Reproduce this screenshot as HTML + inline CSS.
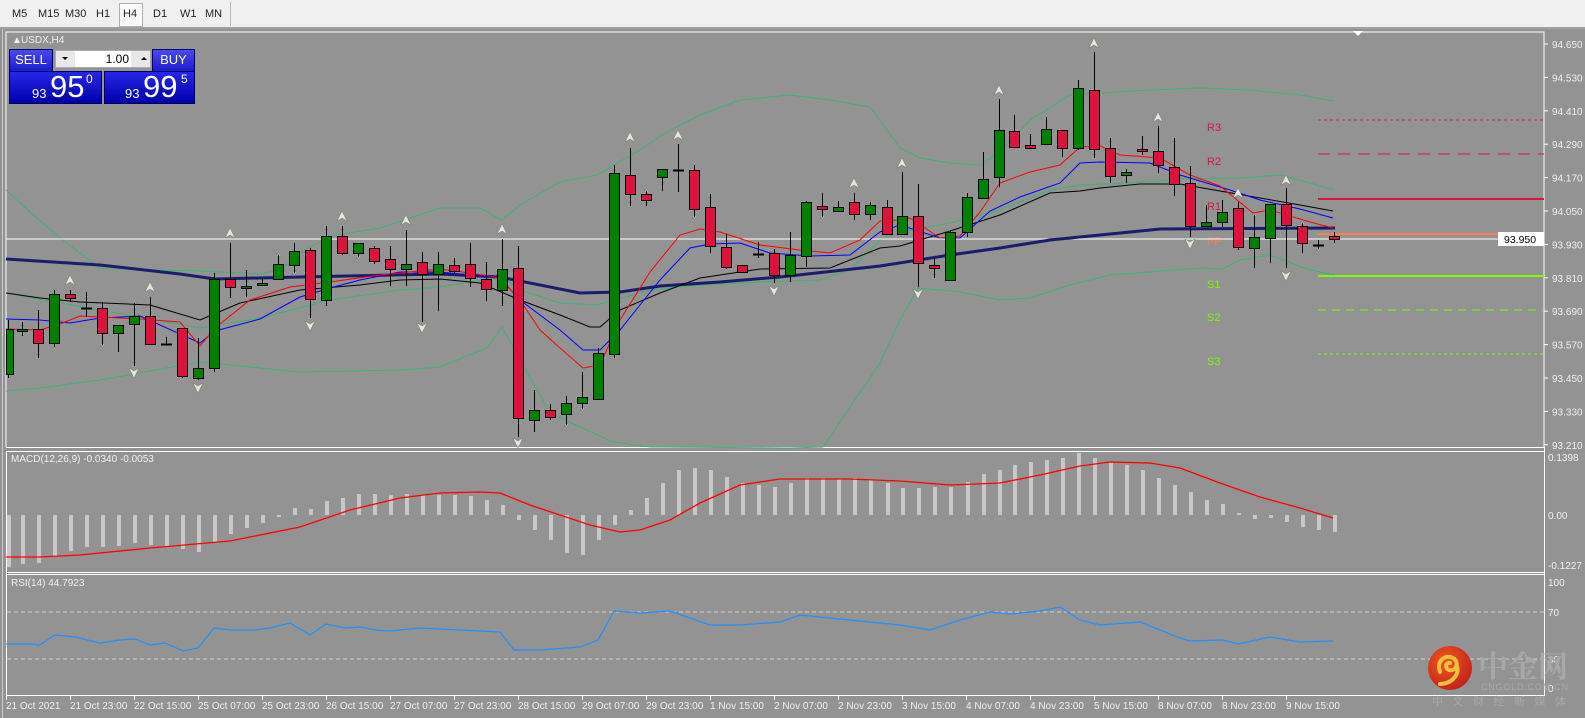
<!DOCTYPE html>
<html><head><meta charset="utf-8">
<style>
html,body{margin:0;padding:0;width:1585px;height:718px;overflow:hidden;background:#939393;font-family:"Liberation Sans","Noto Sans CJK SC",sans-serif;}
#tb{position:absolute;left:0;top:0;width:1585px;height:27px;background:#f0f0f0;border-bottom:2px solid #a0a0a0;}
#tb span{position:absolute;top:8px;font-size:11px;color:#222;}
#h4{position:absolute;left:119px;top:3px;width:22px;height:22px;border:1px solid #b0b0b0;background:#fafafa;}
#sep{position:absolute;left:230px;top:2px;width:1px;height:24px;background:#b8b8b8;}
svg{position:absolute;left:0;top:0;}
.btn{position:absolute;background:linear-gradient(#4a4af0,#1a1ad0);border:1px solid #00006a;color:#fff;font-size:13px;text-align:center;box-sizing:border-box;}
.pb{position:absolute;background:linear-gradient(#2626e8,#0000a8);border:1px solid #00005a;box-sizing:border-box;color:#fff;}
</style></head><body>
<div id="tb">
<span style="left:12px">M5</span><span style="left:38px">M15</span><span style="left:65px">M30</span><span style="left:96px">H1</span>
<div id="h4"></div><span style="left:123px">H4</span><span style="left:153px">D1</span><span style="left:180px">W1</span><span style="left:205px">MN</span>
<div id="sep"></div>
</div>
<svg id="s" width="1585" height="718" xmlns="http://www.w3.org/2000/svg" style="top:0">
<g font-family="Liberation Sans, sans-serif" font-size="10" fill="#f0f0f0">
<rect x="2" y="29" width="1" height="689" fill="#c8c8c8"/>
<polyline points="6,447 6,32 1544,32 1544,447" fill="none" stroke="#fff" stroke-width="1"/>
<line x1="6" y1="447.5" x2="1544" y2="447.5" stroke="#fff"/>
<line x1="6" y1="451.5" x2="1544" y2="451.5" stroke="#fff"/>
<line x1="6" y1="572.5" x2="1544" y2="572.5" stroke="#fff"/>
<line x1="6" y1="574.5" x2="1544" y2="574.5" stroke="#fff"/>
<line x1="6" y1="695.5" x2="1544" y2="695.5" stroke="#fff"/>
<line x1="6.5" y1="451" x2="6.5" y2="696" stroke="#fff"/>
<line x1="1544.5" y1="447" x2="1544.5" y2="696" stroke="#fff"/>
<path d="M1353,31 L1363,31 L1358,36 Z" fill="#fff"/>
<text x="12" y="43" font-size="10">▲</text>
<text x="21" y="43">USDX,H4</text>
<g id="pax"></g>
<line x1="1318" y1="120" x2="1544" y2="120" stroke="#dc143c" stroke-dasharray="3,3"/>
<line x1="1318" y1="154" x2="1544" y2="154" stroke="#dc143c" stroke-dasharray="12,8"/>
<line x1="1318" y1="199" x2="1544" y2="199" stroke="#dc143c" stroke-width="2"/>
<line x1="1318" y1="234" x2="1544" y2="234" stroke="#ff8050" stroke-width="2"/>
<line x1="1318" y1="276" x2="1544" y2="276" stroke="#7cfc00" stroke-width="2"/>
<line x1="1318" y1="310" x2="1544" y2="310" stroke="#7cfc00" stroke-dasharray="8,6"/>
<line x1="1318" y1="354" x2="1544" y2="354" stroke="#7cfc00" stroke-dasharray="3,3"/>
<g font-size="11">
<text x="1207" y="131" fill="#dc143c">R3</text><text x="1207" y="165" fill="#dc143c">R2</text><text x="1207" y="210" fill="#dc143c">R1</text>
<text x="1207" y="245" fill="#ff8050">PP</text><text x="1207" y="288" fill="#7cfc00">S1</text><text x="1207" y="321" fill="#7cfc00">S2</text><text x="1207" y="365" fill="#7cfc00">S3</text>
</g>
<g fill="none" stroke="#3cb371" stroke-width="1">
<polyline points="6,190 30,212 60,238 100,268 150,270 200,271 260,274 280,270 300,253 330,236 380,228 440,208 480,208 502,220 520,205 560,182 597,175 640,150 667,132 700,115 740,100 790,95 830,100 870,107 900,148 920,158 950,163 980,165 1000,152 1030,120 1070,95 1100,93 1150,90 1200,88 1250,90 1300,95 1334,101"/>
<polyline points="6,293 100,310 200,328 260,318 330,300 400,290 440,287 502,277 520,290 560,303 597,305 650,290 700,285 760,282 820,280 850,270 880,240 900,232 950,223 1000,210 1050,190 1080,185 1130,183 1180,179 1240,178 1280,175 1310,183 1334,190"/>
<polyline points="6,391 40,388 100,380 200,362 300,372 400,370 440,367 487,348 502,327 550,413 613,442 650,447 790,448 823,447 880,363 900,320 918,288 930,289 960,292 1000,300 1030,298 1070,285 1110,275 1150,272 1200,268 1223,269 1240,260 1270,255 1307,269 1334,275"/>
</g>
<line x1="6" y1="239" x2="1544" y2="239" stroke="#fff"/>
<polyline fill="none" stroke="#1c1c6c" stroke-width="3" points="6,259 100,265 180,274 215,279 300,277 440,274 500,277 580,293 620,292 660,286 720,282 780,277 880,266 950,255 1000,248 1050,240 1100,235 1160,229 1335,228"/>
<polyline fill="none" stroke="#000" stroke-width="1" points="6,293 40,298 80,302 150,305 200,320 240,303 300,290 360,285 400,280 440,279 480,283 520,300 560,315 590,327 600,327 620,310 660,293 700,278 760,269 830,268 880,248 900,246 950,231 1000,215 1050,193 1080,191 1100,188 1140,184 1180,184 1220,191 1260,198 1300,205 1333,211"/>
<polyline fill="none" stroke="#0000ff" stroke-width="1" points="6,319 40,320 70,323 100,318 140,316 200,343 215,331 260,319 300,297 330,288 360,280 400,272 440,272 500,278 520,300 560,330 583,350 600,350 620,330 660,280 690,248 710,244 740,243 770,253 810,256 850,255 880,232 900,225 940,238 960,238 990,211 1020,197 1060,183 1080,163 1100,162 1150,163 1180,175 1230,190 1260,200 1300,209 1333,218"/>
<polyline fill="none" stroke="#ff0000" stroke-width="1" points="6,329 40,330 60,324 80,316 100,317 140,319 180,322 200,346 215,328 250,300 290,287 330,282 380,275 420,271 440,269 470,273 500,278 520,300 540,330 560,348 583,368 600,365 620,320 650,272 680,235 700,229 720,232 760,245 800,250 830,253 860,240 880,221 900,220 910,218 940,238 960,236 980,212 1000,183 1030,172 1060,165 1080,147 1100,146 1120,155 1160,158 1190,175 1220,186 1253,213 1270,210 1310,222 1333,228"/>
<g id="cd"></g>
<g id="fr" fill="#e8e8d8" stroke="#777" stroke-width="0.5"></g>
<rect x="1498" y="232" width="46" height="14" fill="#fff"/>
<text x="1504" y="243" fill="#000" font-size="10.5">93.950</text>
<text x="11" y="462">MACD(12,26,9) -0.0340 -0.0053</text>
<g id="mh" fill="#c8c8c8"></g>
<polyline fill="none" stroke="#ff0000" stroke-width="1.3" points="6,557 40,557 80,555 150,548 230,541 300,527 350,510 400,498 440,493 480,492 500,493 530,505 560,515 590,525 620,532 640,530 670,520 700,503 740,485 780,479 850,479 900,481 950,485 1000,483 1040,475 1080,466 1110,462 1150,463 1180,468 1220,483 1260,497 1300,508 1333,518"/>
<text x="1548" y="461">0.1398</text><text x="1548" y="519">0.00</text><text x="1548" y="569">-0.1227</text>
<text x="11" y="586">RSI(14) 44.7923</text>
<line x1="7" y1="612" x2="1544" y2="612" stroke="#d0d0d0" stroke-dasharray="4,3"/>
<line x1="7" y1="659" x2="1544" y2="659" stroke="#d0d0d0" stroke-dasharray="4,3"/>
<polyline fill="none" stroke="#1e90ff" stroke-width="1.2" points="6,644 36,644 38,646 55,635 75,637 100,643 120,640 135,639 150,645 165,643 183,651 198,648 214,628 230,630 255,630 270,628 290,623 310,635 326,624 345,628 360,627 375,630 390,631 420,628 460,630 500,632 514,650 540,650 580,647 598,640 614,611 640,613 670,611 690,618 710,625 740,625 780,622 800,615 830,618 870,622 900,625 930,630 960,620 990,612 1010,614 1040,611 1060,607 1080,620 1100,625 1140,622 1180,638 1190,641 1223,640 1238,644 1270,637 1300,642 1333,641"/>
<text x="1548" y="586">100</text><text x="1548" y="616">70</text><text x="1548" y="663">30</text><text x="1548" y="692">0</text>
<g id="tax"></g>
<defs><radialGradient id="lg" cx="0.4" cy="0.35" r="0.7"><stop offset="0" stop-color="#f05a20"/><stop offset="1" stop-color="#c0201a"/></radialGradient></defs>
<circle cx="1450" cy="668" r="22" fill="url(#lg)"/>
<path d="M1440,672 C1436,660 1446,654 1453,658 C1460,662 1456,672 1449,670 C1444,668 1446,662 1450,663 M1457,666 C1460,676 1450,684 1440,684" fill="none" stroke="#f5c040" stroke-width="4" stroke-linecap="round"/>
<text x="1478" y="677" font-family="Noto Serif CJK SC, serif" font-size="30" font-weight="bold" fill="#a8a8a8">中金网</text>
<text x="1481" y="690" font-size="9" fill="#a8a8a8" letter-spacing="0.8">CNGOLD.COM.CN</text>
<text x="1432" y="705" font-size="11" fill="#a8a8a8" letter-spacing="9.5" font-family="Noto Sans CJK SC, sans-serif">中文财经新媒体</text>
</g>
</svg>
<div class="btn" style="left:9px;top:49px;width:44px;height:23px;line-height:20px">SELL</div>
<div style="position:absolute;left:55px;top:50px;width:96px;height:18px;background:#e8e8e8;border:1px solid #aaa;box-sizing:border-box;">
<div style="position:absolute;left:19px;top:0;width:56px;height:16px;background:#fff;font-size:12px;text-align:right;line-height:16px;padding-right:2px;box-sizing:border-box">1.00</div>
<div style="position:absolute;left:6px;top:6px;border-left:3px solid transparent;border-right:3px solid transparent;border-top:3px solid #000"></div>
<div style="position:absolute;left:85px;top:6px;border-left:3px solid transparent;border-right:3px solid transparent;border-bottom:3px solid #000"></div>
</div>
<div class="btn" style="left:152px;top:49px;width:43px;height:23px;line-height:20px">BUY</div>
<div class="pb" style="left:9px;top:71px;width:93px;height:33px">
<span style="position:absolute;left:22px;top:14px;font-size:13px">93</span>
<span style="position:absolute;left:40px;top:-3px;font-size:31px">95</span>
<span style="position:absolute;left:76px;top:0px;font-size:12px">0</span></div>
<div class="pb" style="left:104px;top:71px;width:91px;height:33px">
<span style="position:absolute;left:20px;top:14px;font-size:13px">93</span>
<span style="position:absolute;left:38px;top:-3px;font-size:31px">99</span>
<span style="position:absolute;left:76px;top:0px;font-size:12px">5</span></div>
<script>
var NS="http://www.w3.org/2000/svg";
function el(p,t,a,txt){var e=document.createElementNS(NS,t);for(var k in a)e.setAttribute(k,a[k]);if(txt)e.textContent=txt;document.getElementById(p).appendChild(e);return e;}
var C=[[8,329,374,320,378,'g'],[22,329,331,322,336,'g'],[38,329,343,310,358,'r'],[54,294,343,290,347,'g'],[70,294,298,290,302,'r'],[86,308,308,292,317,'d'],[102,308,333,302,345,'r'],[118,325,333,325,352,'g'],[134,316,324,303,366,'g'],[150,316,344,297,344,'r'],[166,344,344,337,344,'d'],[182,328,376,328,378,'r'],[198,368,378,338,380,'g'],[214,279,368,273,372,'g'],[230,279,287,243,298,'r'],[246,286,287,270,297,'g'],[262,283,285,278,286,'g'],[278,264,279,255,280,'g'],[294,251,265,243,273,'g'],[310,250,299,248,318,'r'],[326,236,300,226,306,'g'],[342,236,253,226,255,'r'],[358,243,253,243,257,'g'],[374,248,261,246,264,'r'],[390,259,269,246,286,'r'],[406,264,269,230,286,'g'],[422,262,274,252,322,'r'],[438,264,274,252,311,'g'],[454,265,271,258,274,'r'],[470,264,278,243,287,'r'],[486,279,289,262,301,'r'],[502,269,290,239,306,'g'],[518,268,418,246,437,'r'],[534,410,420,390,432,'g'],[550,410,417,404,420,'r'],[566,403,414,396,425,'g'],[582,397,403,372,409,'g'],[598,353,399,348,399,'g'],[614,173,354,165,358,'g'],[630,175,194,148,206,'r'],[646,194,200,191,206,'r'],[662,169,177,169,191,'g'],[678,170,170,144,192,'d'],[694,170,209,165,217,'r'],[710,207,246,194,253,'r'],[726,247,267,234,269,'r'],[742,265,272,265,272,'r'],[758,254,254,242,258,'d'],[774,253,275,249,283,'r'],[790,255,275,232,282,'g'],[806,202,256,201,267,'g'],[822,206,209,193,217,'r'],[838,207,211,201,212,'g'],[854,202,214,193,220,'r'],[870,205,214,202,220,'g'],[887,207,234,200,235,'r'],[902,216,234,172,235,'g'],[918,216,263,184,287,'r'],[934,265,268,258,278,'r'],[950,232,280,230,280,'g'],[967,197,232,193,237,'g'],[983,179,198,152,198,'g'],[999,130,177,99,187,'g'],[1014,131,147,115,147,'r'],[1030,145,148,134,148,'r'],[1046,129,144,117,144,'g'],[1062,130,148,130,157,'r'],[1078,88,148,80,150,'g'],[1094,90,149,52,158,'r'],[1110,148,176,138,183,'r'],[1126,172,175,169,183,'g'],[1142,149,151,136,155,'r'],[1158,151,165,126,173,'r'],[1174,167,184,138,196,'r'],[1190,183,226,166,237,'r'],[1206,222,226,205,227,'g'],[1222,212,222,200,227,'g'],[1238,208,247,202,250,'r'],[1254,237,248,215,268,'g'],[1270,204,238,204,263,'g'],[1286,204,225,188,268,'r'],[1302,226,243,223,253,'r'],[1318,245,245,240,249,'d'],[1334,236,239,232,243,'r']];
C.forEach(function(c){var x=c[0];el('cd','line',{x1:x+.5,y1:c[3],x2:x+.5,y2:c[4],stroke:'#000'});
if(c[5]=='d'){el('cd','line',{x1:x-5,y1:c[1]+.5,x2:x+6,y2:c[1]+.5,stroke:'#000','stroke-width':2});}
else{var h=Math.max(c[2]-c[1],2);el('cd','rect',{x:Math.max(x-4.5,6.5),y:c[1]+.5,width:x-4.5<6.5?x+5.5-6.5:10,height:h,fill:c[5]=='g'?'#008000':'#dc143c',stroke:'#000'});}});
var up=[[70,280],[150,287],[230,233],[342,216],[406,220],[502,229],[630,137],[678,135],[854,183],[902,163],[999,90],[1094,43],[1158,117],[1238,193],[1286,180]];
var dn=[[134,373],[198,388],[310,326],[422,328],[518,443],[774,291],[918,294],[1190,244],[1286,276]];
up.forEach(function(p){el('fr','path',{d:'M'+(p[0]-5)+','+(p[1]+5)+' L'+p[0]+','+(p[1]-5)+' L'+(p[0]+5)+','+(p[1]+5)+' L'+p[0]+','+(p[1]+2)+' Z'});});
dn.forEach(function(p){el('fr','path',{d:'M'+(p[0]-5)+','+(p[1]-5)+' L'+p[0]+','+(p[1]+5)+' L'+(p[0]+5)+','+(p[1]-5)+' L'+p[0]+','+(p[1]-2)+' Z'});});
var M=[567,564,563,557,551,547,547,546,543,545,546,549,552,542,534,528,523,516,508,509,501,498,494,494,495,494,495,495,495,496,500,505,520,530,540,553,555,540,525,510,498,483,470,468,470,477,483,485,487,483,478,478,479,478,480,483,488,488,487,487,482,474,470,465,462,460,458,453,458,462,465,470,478,485,492,500,504,513,519,518,522,527,530,532];
C.forEach(function(c,i){var v=M[i];if(v==null)return;var y1=Math.min(v,515),y2=Math.max(v,515);if(y2-y1<2)y2=y1+2;el('mh','rect',{x:Math.max(c[0]-1,7),y:y1,width:c[0]-1<7?3:4,height:y2-y1});});
var P=["94.650","94.530","94.410","94.290","94.170","94.050","93.930","93.810","93.690","93.570","93.450","93.330","93.210"];
P.forEach(function(t,i){var y=44+i*33.4;el('pax','line',{x1:1544,y1:y,x2:1548,y2:y,stroke:'#fff'});el('pax','text',{x:1552,y:y+4},t);});
var T=["21 Oct 2021","21 Oct 23:00","22 Oct 15:00","25 Oct 07:00","25 Oct 23:00","26 Oct 15:00","27 Oct 07:00","27 Oct 23:00","28 Oct 15:00","29 Oct 07:00","29 Oct 23:00","1 Nov 15:00","2 Nov 07:00","2 Nov 23:00","3 Nov 15:00","4 Nov 07:00","4 Nov 23:00","5 Nov 15:00","8 Nov 07:00","8 Nov 23:00","9 Nov 15:00"];
T.forEach(function(t,i){var x=6+i*64;el('tax','line',{x1:x+.5,y1:696,x2:x+.5,y2:700,stroke:'#fff'});el('tax','text',{x:x,y:709},t);});
</script>
</body></html>
